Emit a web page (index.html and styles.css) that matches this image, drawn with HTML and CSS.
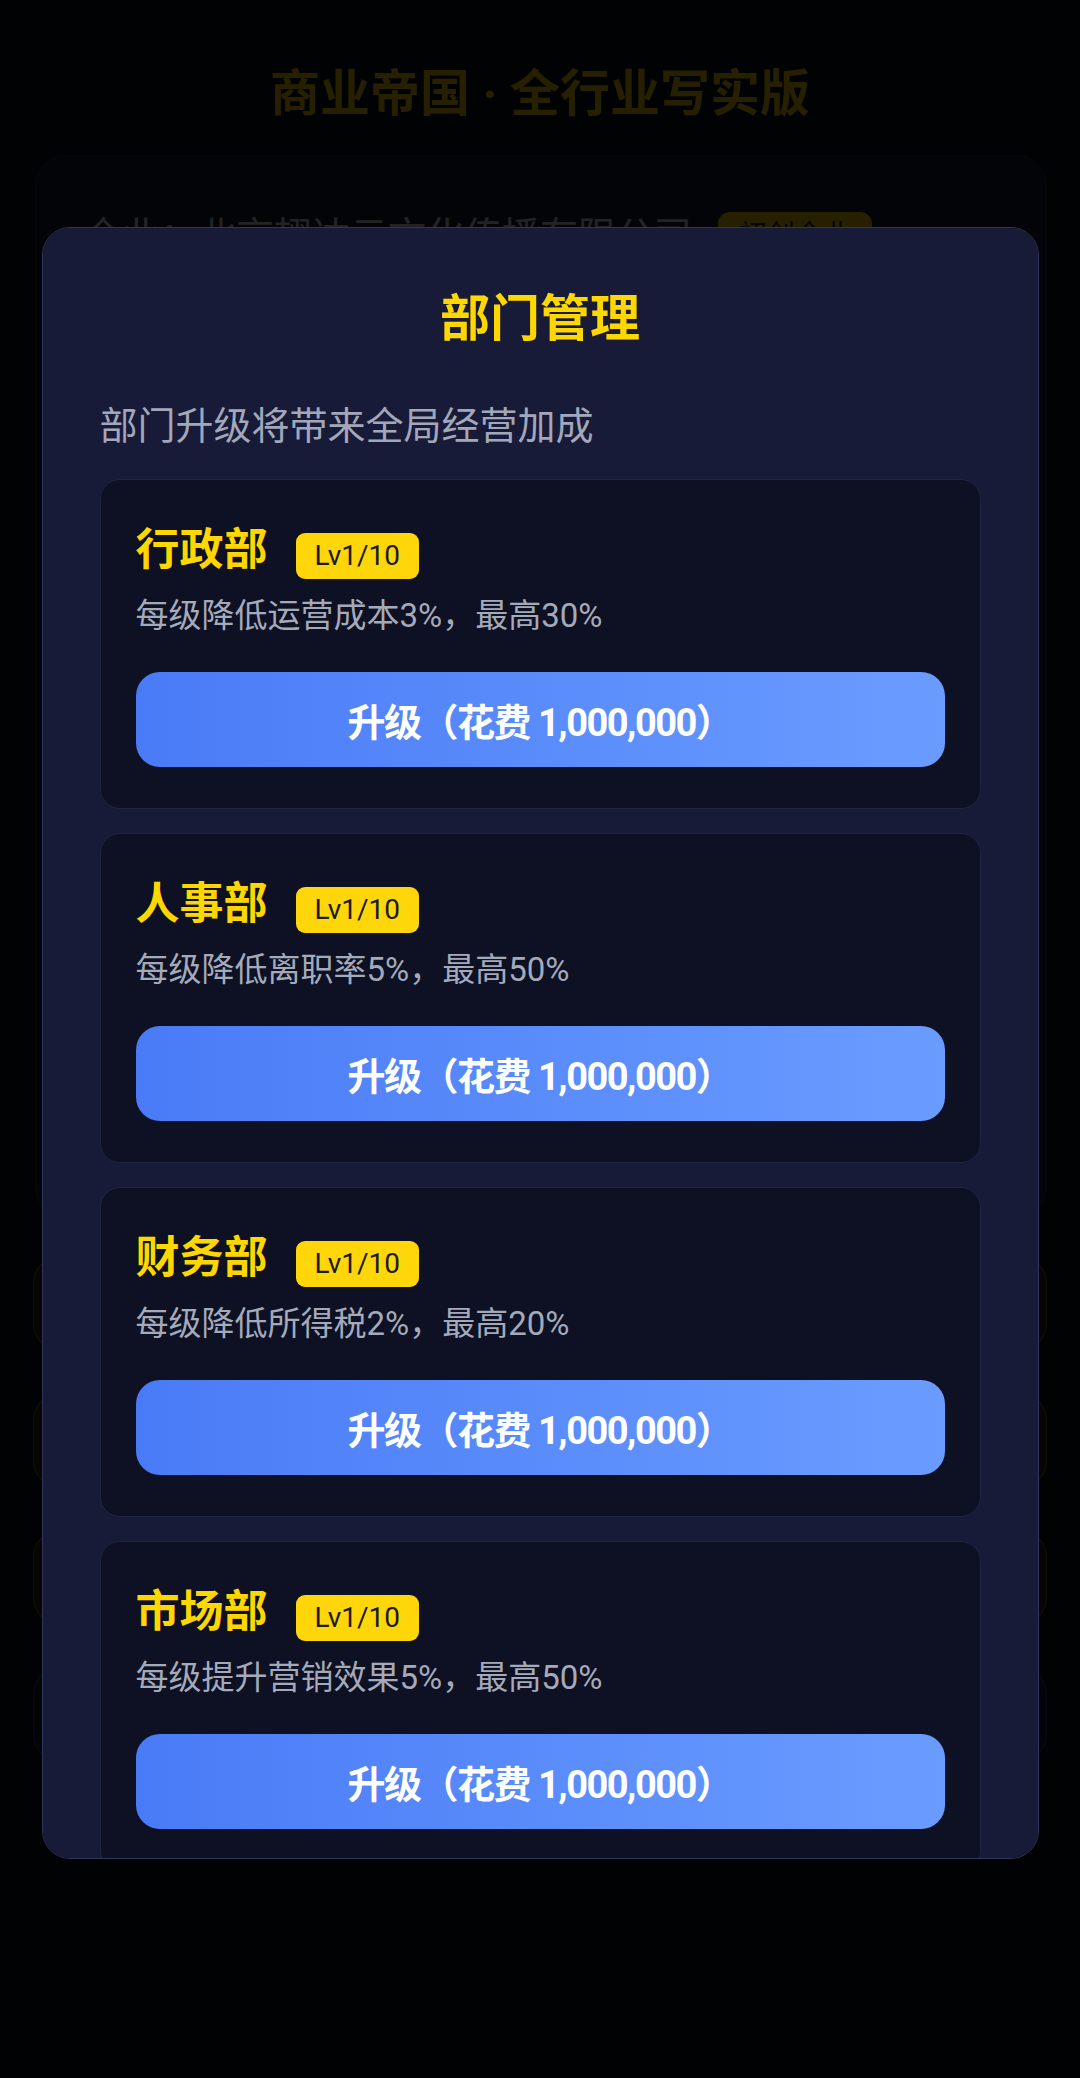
FILE: index.html
```html
<!DOCTYPE html>
<html>

<head>
    <meta charset="utf-8">
    <title>商业帝国 · 全行业写实版</title>
    <link rel="stylesheet" href="styles.css">
</head>

<body>
    <!-- 主界面（被弹窗遮住） -->
    <div class="app">
        <h1 class="game-title">商业帝国 · 全行业写实版</h1>

        <div class="company-card">
            <div class="company-row">
                <span class="company-name">企业：北京翅达云文化传播有限公司</span>
                <span class="company-tag">初创企业</span>
            </div>
            <div class="stats">
                <div class="stat"><span>资金</span><b>12,450,000</b></div>
                <div class="stat"><span>员工</span><b>36</b></div>
                <div class="stat"><span>月营收</span><b>860,000</b></div>
                <div class="stat"><span>月支出</span><b>540,000</b></div>
                <div class="stat"><span>声望</span><b>120</b></div>
                <div class="stat"><span>市值</span><b>30,000,000</b></div>
                <div class="stat"><span>行业</span><b>文化传媒</b></div>
                <div class="stat"><span>回合</span><b>第 8 月</b></div>
            </div>
        </div>

        <div class="actions">
            <button class="action-btn">部门管理</button>
            <button class="action-btn">招聘员工</button>
            <button class="action-btn">投资扩张</button>
            <button class="action-btn action-btn-blue">下一回合</button>
        </div>
    </div>

    <!-- 部门管理弹窗 -->
    <div class="overlay">
        <div class="modal">
            <h2 class="modal-title">部门管理</h2>
            <p class="modal-desc">部门升级将带来全局经营加成</p>

            <div class="dept-list">
                <!-- 行政部 -->
                <div class="dept-card">
                    <div class="dept-head">
                        <span class="dept-name">行政部</span>
                        <span class="dept-level">Lv1/10</span>
                    </div>
                    <p class="dept-effect">每级降低运营成本3%，最高30%</p>
                    <button class="upgrade-btn">升级（花费 1,000,000）</button>
                </div>

                <!-- 人事部 -->
                <div class="dept-card">
                    <div class="dept-head">
                        <span class="dept-name">人事部</span>
                        <span class="dept-level">Lv1/10</span>
                    </div>
                    <p class="dept-effect">每级降低离职率5%，最高50%</p>
                    <button class="upgrade-btn">升级（花费 1,000,000）</button>
                </div>

                <!-- 财务部 -->
                <div class="dept-card">
                    <div class="dept-head">
                        <span class="dept-name">财务部</span>
                        <span class="dept-level">Lv1/10</span>
                    </div>
                    <p class="dept-effect">每级降低所得税2%，最高20%</p>
                    <button class="upgrade-btn">升级（花费 1,000,000）</button>
                </div>

                <!-- 市场部 -->
                <div class="dept-card">
                    <div class="dept-head">
                        <span class="dept-name">市场部</span>
                        <span class="dept-level">Lv1/10</span>
                    </div>
                    <p class="dept-effect">每级提升营销效果5%，最高50%</p>
                    <button class="upgrade-btn">升级（花费 1,000,000）</button>
                </div>
            </div>
        </div>
    </div>
</body>

</html>
```

FILE: styles.css
```css
/* 全局 */
body {
    margin: 0;
    background-color: #0b0e1c;
    font-family: Roboto, "Noto Sans CJK SC", sans-serif;
    color: #e6e8f0;
}

/* 主界面 */
.app {
    padding: 0 33px;
}

.game-title {
    margin: 0;
    padding-top: 57px;
    font-size: 50px;
    line-height: 75px;
    text-align: center;
    color: #ffd700;
}

.company-card {
    margin-top: 23px;
    margin-left: 2px;
    padding: 52px 48px 48px;
    background-color: #1a1d3a;
    border: 1px solid #2a2f55;
    border-radius: 30px;
}

.company-row {
    display: flex;
    align-items: center;
    gap: 26px;
    font-size: 38px;
    line-height: 56px;
}

.company-tag {
    padding: 0 21px;
    line-height: 48px;
    background-color: #ffd700;
    color: #1b1b1b;
    border-radius: 12px;
    font-size: 28px;
}

.stats {
    display: grid;
    grid-template-columns: 1fr 1fr;
    gap: 24px;
    margin-top: 40px;
}

.stat {
    min-height: 150px;
    padding: 24px;
    background-color: #0d1123;
    border-radius: 20px;
    display: flex;
    flex-direction: column;
    gap: 10px;
    font-size: 28px;
}

.stat b {
    font-size: 36px;
    color: #ffd700;
}

.actions {
    display: flex;
    flex-direction: column;
    gap: 44px;
    margin-top: 40px;
}

.action-btn {
    height: 93px;
    border: 1px solid rgba(255, 215, 0, 0.4);
    border-radius: 26px;
    background-color: rgba(255, 215, 0, 0.12);
    color: #ffd700;
    font-family: inherit;
    font-size: 34px;
    font-weight: bold;
}

.action-btn-blue {
    border-color: rgba(80, 130, 255, 0.4);
    background-color: rgba(80, 130, 255, 0.12);
    color: #8fb0ff;
}

/* 遮罩层 */
.overlay {
    position: fixed;
    top: 0;
    left: 0;
    right: 0;
    bottom: 0;
    padding-top: 8px;
    background-color: rgba(0, 0, 0, 0.85);
    display: flex;
    justify-content: center;
    align-items: center;
}

/* 弹窗 */
.modal {
    width: 997px;
    height: 1632px;
    box-sizing: border-box;
    padding: 61px 57px;
    background-color: #181b38;
    border: 1px solid #30355a;
    border-radius: 28px;
    overflow-y: auto;
    scrollbar-width: none; /* 隐藏滚动条 */
}

.modal-title {
    margin: 0;
    font-size: 50px;
    line-height: 60px;
    text-align: center;
    color: #ffd700;
}

.modal-desc {
    margin: 52px 0 0;
    font-size: 38px;
    line-height: 50px;
    color: #a3a7ba;
}

.dept-list {
    display: flex;
    flex-direction: column;
    gap: 24px;
    margin-top: 28px;
}

/* 部门卡片 */
.dept-card {
    padding: 42px 35px 41px;
    background-color: #0d1123;
    border: 1px solid #1f2442;
    border-radius: 20px;
}

.dept-head {
    display: flex;
    align-items: baseline;
    gap: 28px;
}

.dept-name {
    font-size: 44px;
    line-height: 56px;
    font-weight: bold;
    color: #ffd700;
}

.dept-level {
    padding: 6px 19px;
    font-size: 28px;
    line-height: 34px;
    background-color: #ffd60a;
    color: #1b1b1b;
    border-radius: 9px;
}

.dept-effect {
    margin: 15px 0 0;
    font-size: 33px;
    line-height: 44px;
    color: #a5aabb;
}

.upgrade-btn {
    display: block;
    width: 100%;
    height: 95px;
    margin-top: 34px;
    border: none;
    border-radius: 24px;
    background: linear-gradient(90deg, #4a7bf7, #6a9cff);
    color: #ffffff;
    font-family: inherit;
    font-size: 38px;
    font-weight: bold;
    letter-spacing: -1.5px;
}
```
